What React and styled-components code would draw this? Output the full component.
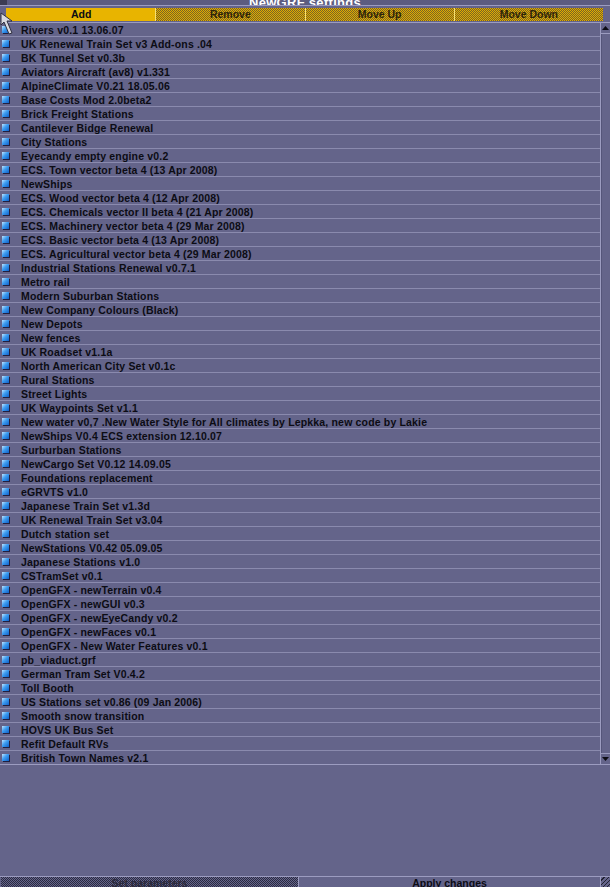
import React from 'react';
import styled, { createGlobalStyle } from 'styled-components';

const GlobalStyle = createGlobalStyle`
  html, body {
    margin: 0;
    padding: 0;
    background: #64648a;
  }
`;

const grfs = [
  'Rivers v0.1 13.06.07',
  'UK Renewal Train Set v3 Add-ons .04',
  'BK Tunnel Set v0.3b',
  'Aviators Aircraft (av8) v1.331',
  'AlpineClimate V0.21 18.05.06',
  'Base Costs Mod 2.0beta2',
  'Brick Freight Stations',
  'Cantilever Bidge Renewal',
  'City Stations',
  'Eyecandy empty engine v0.2',
  'ECS. Town vector beta 4 (13 Apr 2008)',
  'NewShips',
  'ECS. Wood vector beta 4 (12 Apr 2008)',
  'ECS. Chemicals vector II beta 4 (21 Apr 2008)',
  'ECS. Machinery vector beta 4 (29 Mar 2008)',
  'ECS. Basic vector beta 4 (13 Apr 2008)',
  'ECS. Agricultural vector beta 4 (29 Mar 2008)',
  'Industrial Stations Renewal v0.7.1',
  'Metro rail',
  'Modern Suburban Stations',
  'New Company Colours (Black)',
  'New Depots',
  'New fences',
  'UK Roadset v1.1a',
  'North American City Set v0.1c',
  'Rural Stations',
  'Street Lights',
  'UK Waypoints Set v1.1',
  'New water v0,7 .New Water Style for All climates by Lepkka, new code by Lakie',
  'NewShips V0.4 ECS extension 12.10.07',
  'Surburban Stations',
  'NewCargo Set V0.12 14.09.05',
  'Foundations replacement',
  'eGRVTS v1.0',
  'Japanese Train Set v1.3d',
  'UK Renewal Train Set v3.04',
  'Dutch station set',
  'NewStations V0.42 05.09.05',
  'Japanese Stations v1.0',
  'CSTramSet v0.1',
  'OpenGFX - newTerrain v0.4',
  'OpenGFX - newGUI v0.3',
  'OpenGFX - newEyeCandy v0.2',
  'OpenGFX - newFaces v0.1',
  'OpenGFX - New Water Features v0.1',
  'pb_viaduct.grf',
  'German Tram Set V0.4.2',
  'Toll Booth',
  'US Stations set v0.86 (09 Jan 2006)',
  'Smooth snow transition',
  'HOVS UK Bus Set',
  'Refit Default RVs',
  'British Town Names v2.1',
];

const Window = styled.div`
  position: relative;
  width: 610px;
  height: 887px;
  overflow: hidden;
  background: #64648a;
  display: flex;
  flex-direction: column;
  font-family: "Liberation Sans", Arial, sans-serif;
  font-weight: bold;
  font-size: 10.5px;
  color: #0c0c14;
`;

const TitleBar = styled.div`
  height: 5px;
  flex: none;
  display: flex;
  justify-content: center;
  align-items: flex-end;
  overflow: hidden;
  border-bottom: 1px solid #9c9cc0;
  background: #5c5c80;
`;

const Title = styled.span`
  color: #ffffff;
  font-size: 13px;
  line-height: 13px;
  margin-bottom: -4px;
  letter-spacing: 0.3px;
`;

const ButtonRow = styled.div`
  flex: none;
  display: grid;
  grid-template-columns: repeat(4, 1fr);
  height: 13px;
  margin: 2px 7px 1px 6px;
`;

const checker = `repeating-conic-gradient(#e0ac00 0 25%, #7a6424 0 50%) 0 0 / 2px 2px`;

const TopButton = styled.div`
  display: flex;
  align-items: center;
  justify-content: center;
  line-height: 13px;
  background: ${p => (p.disabled ? checker : '#e8b400')};
  border-left: 1px solid ${p => (p.first ? '#e8b400' : '#f8e070')};
  color: ${p => (p.disabled ? '#2e2408' : '#0c0c14')};
`;

const ListArea = styled.div`
  flex: none;
  display: flex;
  border-top: 1px solid #9c9cc0;
  border-bottom: 1px solid #9c9cc0;
`;

const List = styled.div`
  flex: 1;
  display: flex;
  flex-direction: column;
`;

const Row = styled.div`
  height: 13px;
  display: flex;
  align-items: center;
  border-bottom: 1px solid #8a8aae;
  white-space: nowrap;

  &:last-child {
    border-bottom: none;
  }
`;

const GrfIcon = styled.span`
  flex: none;
  width: 7px;
  height: 7px;
  margin: 0 12px 0 2px;
  background: linear-gradient(135deg, #bfe4ff 0%, #3c9cf0 45%, #1060c8 100%);
  box-shadow: 1px 1px 0 #202040;
`;

const Name = styled.span`
  letter-spacing: 0.17px;
`;

const Scrollbar = styled.div`
  flex: none;
  width: 9px;
  display: flex;
  flex-direction: column;
  border-left: 1px solid #9c9cc0;
  background: #64648a;
`;

const ScrollButton = styled.div`
  flex: none;
  height: 10px;
  display: flex;
  align-items: center;
  justify-content: center;
  border-bottom: ${p => (p.down ? 'none' : '1px solid #9c9cc0')};
  border-top: ${p => (p.down ? '1px solid #9c9cc0' : 'none')};
`;

const ScrollTrack = styled.div`
  flex: 1;
  border-left: 1px solid #55557a;
`;

const Spacer = styled.div`
  flex: 1;
`;

const BottomRow = styled.div`
  flex: none;
  height: 10px;
  display: grid;
  grid-template-columns: 298px 1fr 10px;
  border-top: 1px solid #9c9cc0;
`;

const BottomButton = styled.div`
  display: flex;
  align-items: flex-start;
  justify-content: center;
  overflow: hidden;
  line-height: 12px;
  background: ${p =>
    p.disabled
      ? 'repeating-conic-gradient(#64648a 0 25%, #2a2a40 0 50%) 0 0 / 2px 2px'
      : '#64648a'};
  border-left: 1px solid ${p => (p.disabled ? '#64648a' : '#9c9cc0')};
  color: ${p => (p.disabled ? '#2a2a3c' : '#0c0c14')};
`;

const ResizeBox = styled.div`
  border-left: 1px solid #9c9cc0;
  background: repeating-linear-gradient(135deg, #64648a 0 2px, #202030 2px 3px);
`;

const CloseBox = styled.div`
  position: absolute;
  left: 0;
  top: 0;
  width: 7px;
  height: 5px;
  background: #3c3c54;
`;

const Cursor = styled.svg`
  position: absolute;
  left: 0;
  top: 12px;
`;

const Arrow = ({ down }) => (
  <svg width="7" height="4" viewBox="0 0 7 4">
    {down ? <polygon points="0,0 7,0 3.5,4" fill="#0c0c14" /> : <polygon points="0,4 7,4 3.5,0" fill="#0c0c14" />}
  </svg>
);

export default function App() {
  return (
    <>
      <GlobalStyle />
      <Window>
        <TitleBar>
          <Title>NewGRF settings</Title>
        </TitleBar>
        <ButtonRow>
          <TopButton first>Add</TopButton>
          <TopButton disabled>Remove</TopButton>
          <TopButton disabled>Move Up</TopButton>
          <TopButton disabled>Move Down</TopButton>
        </ButtonRow>
        <ListArea>
          <List>
            {grfs.map(name => (
              <Row key={name}>
                <GrfIcon />
                <Name>{name}</Name>
              </Row>
            ))}
          </List>
          <Scrollbar>
            <ScrollButton>
              <Arrow />
            </ScrollButton>
            <ScrollTrack />
            <ScrollButton down>
              <Arrow down />
            </ScrollButton>
          </Scrollbar>
        </ListArea>
        <Spacer />
        <BottomRow>
          <BottomButton disabled>Set parameters</BottomButton>
          <BottomButton>Apply changes</BottomButton>
          <ResizeBox />
        </BottomRow>
        <CloseBox />
        <Cursor width="16" height="26" viewBox="0 0 16 26">
          <polygon points="1,1 1,13 4,10 9,22 12,21 7,9 12,9" fill="#d8d8e0" stroke="#303040" strokeWidth="1" />
        </Cursor>
      </Window>
    </>
  );
}
